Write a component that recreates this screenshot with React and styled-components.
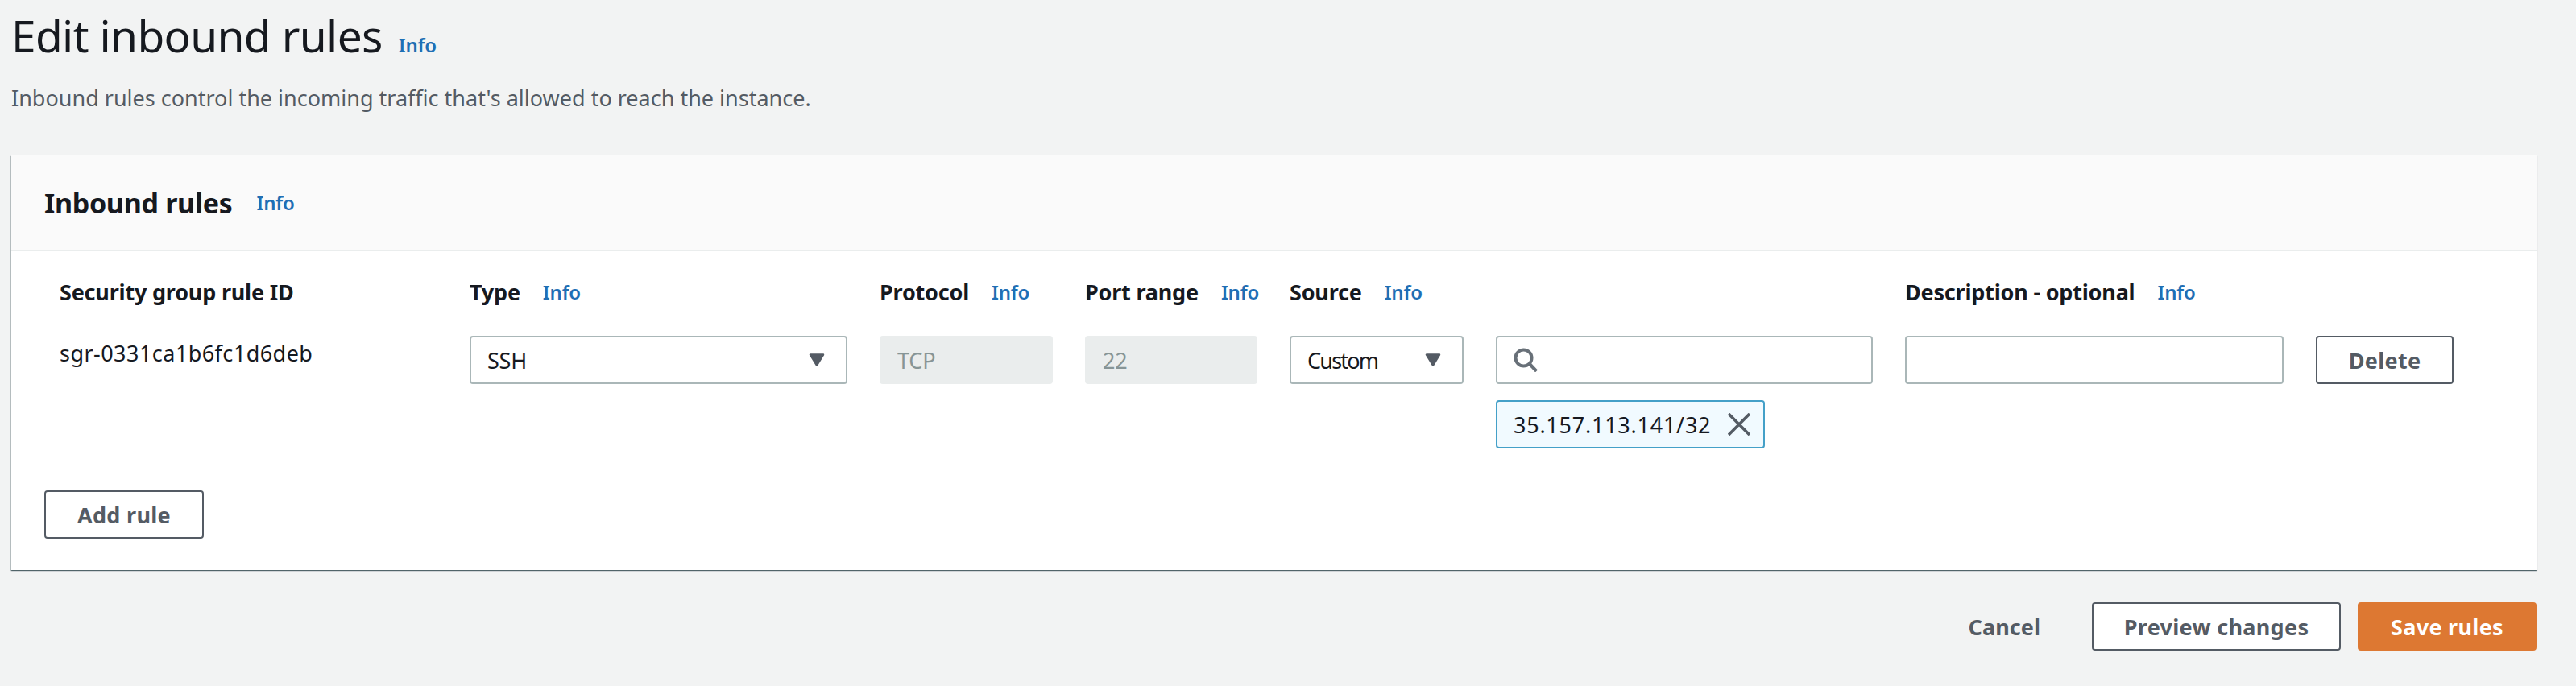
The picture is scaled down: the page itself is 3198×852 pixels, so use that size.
import React from "react";
import styled, { createGlobalStyle } from "styled-components";

const GlobalStyle = createGlobalStyle`
html, body {
  margin: 0;
  padding: 0;
  background: #f2f3f3;
  font-family: "Noto Sans", "Open Sans", sans-serif;
  color: #16191f;
}
`;

const Page = styled.div`
  width: 3198px;
  height: 852px;
  box-sizing: border-box;
  padding: 0 49px 0 14px;
  overflow: hidden;
  display: flex;
  flex-direction: column;
`;

const TitleRow = styled.div`
  display: flex;
  align-items: baseline;
  gap: 20px;
  height: 76px;
`;

const Title = styled.h1`
  margin: 0;
  font-size: 55px;
  line-height: 87px;
  font-weight: 400;
  letter-spacing: -0.65px;
`;

const Info = styled.a`
  font-size: 24px;
  font-weight: 600;
  color: #1f6fb5;
  letter-spacing: -0.2px;
`;

const Subtitle = styled.p`
  margin: 26px 0 0;
  font-size: 27px;
  line-height: 40px;
  color: #545b64;
`;

const Card = styled.section`
  margin-top: 51px;
  height: 515px;
  background: #fff;
  box-shadow: 0 1px 1px 0 rgba(0, 28, 36, 0.5), 1px 1px 1px 0 rgba(0, 28, 36, 0.18),
    -1px 1px 1px 0 rgba(0, 28, 36, 0.18);
  display: flex;
  flex-direction: column;
`;

const CardHeader = styled.header`
  height: 119px;
  box-sizing: border-box;
  background: #fafafa;
  border-bottom: 2px solid #eaeded;
  padding: 0 41px;
  display: flex;
  align-items: center;
  gap: 30px;
`;

const CardTitle = styled.h2`
  margin: 0;
  font-size: 34px;
  font-weight: 700;
  letter-spacing: -0.3px;
`;

const CardBody = styled.div`
  padding: 30px 41px 0;
  display: flex;
  flex-direction: column;
`;

const RuleGrid = styled.div`
  display: grid;
  padding-left: 19px;
  grid-template-columns: 469px 469px 215px 214px 216px 468px 470px 171px;
  grid-template-rows: 55px 60px 60px;
  column-gap: 40px;
  row-gap: 20px;
`;

const Label = styled.div`
  display: flex;
  align-items: center;
  gap: 28px;
  height: 40px;
  font-size: 27px;
  font-weight: 700;
  letter-spacing: -0.2px;
  white-space: nowrap;
`;

const RuleId = styled.div`
  padding-top: 2px;
  font-size: 27px;
  line-height: 40px;
  letter-spacing: 0.45px;
`;

const Box = styled.div`
  box-sizing: border-box;
  height: 60px;
  border: 2px solid #aab7b8;
  border-radius: 4px;
  background: #fff;
  padding: 0 26px 0 20px;
  display: flex;
  align-items: center;
  justify-content: space-between;
  font-size: 27px;
  letter-spacing: -0.2px;
`;

const DisabledBox = styled(Box)`
  background: #eaeded;
  border-color: #eaeded;
  color: #879596;
`;

const SearchBox = styled(Box)`
  justify-content: flex-start;
`;

const TightText = styled.span`
  letter-spacing: -1.8px;
`;

const Chip = styled.div`
  grid-column: 6;
  justify-self: start;
  box-sizing: border-box;
  width: 334px;
  height: 60px;
  border: 2px solid #44a0c8;
  border-radius: 4px;
  background: #f1faff;
  padding: 0 16px 0 20px;
  display: flex;
  align-items: center;
  justify-content: space-between;
  font-size: 27px;
  letter-spacing: 0.75px;
`;

const Button = styled.button`
  box-sizing: border-box;
  height: 60px;
  border: 2px solid #545b64;
  border-radius: 4px;
  background: #fff;
  color: #545b64;
  font-family: inherit;
  font-size: 27px;
  font-weight: 700;
  letter-spacing: 0.3px;
  padding: 0;
  width: ${(props) => props.$width}px;
`;

const AddRow = styled.div`
  margin-top: 52px;
`;

const Footer = styled.footer`
  margin-top: 40px;
  display: flex;
  justify-content: flex-end;
  align-items: center;
`;

const LinkButton = styled.span`
  font-size: 27px;
  font-weight: 700;
  letter-spacing: 0.05px;
  color: #545b64;
  margin-right: 64px;
`;

const PrimaryButton = styled(Button)`
  margin-left: 21px;
  background: #dd7832;
  border-color: #dd7832;
  color: #fff;
`;

const Caret = () => (
  <svg width="20" height="16" viewBox="0 0 20 16">
    <path d="M2 1.5h16L10 14.5z" fill="#545b64" stroke="#545b64" strokeWidth="2.5" strokeLinejoin="round" />
  </svg>
);

const SearchIcon = () => (
  <svg width="30" height="30" viewBox="0 0 30 30" fill="none" stroke="#687078" strokeWidth="4">
    <circle cx="12.5" cy="12.5" r="10" />
    <path d="M19.5 19.5l9 9.5" />
  </svg>
);

const CloseIcon = () => (
  <svg width="28" height="28" viewBox="0 0 28 28" fill="none" stroke="#545b64" strokeWidth="3.6">
    <path d="M1 1l26 26M27 1L1 27" />
  </svg>
);

const columns = [
  { text: "Security group rule ID" },
  { text: "Type", info: true },
  { text: "Protocol", info: true },
  { text: "Port range", info: true },
  { text: "Source", info: true },
  { text: "" },
  { text: "Description - optional", info: true },
  { text: "" },
];

const App = () => (
  <Page>
    <GlobalStyle />
    <TitleRow>
      <Title>Edit inbound rules</Title>
      <Info>Info</Info>
    </TitleRow>
    <Subtitle>Inbound rules control the incoming traffic that's allowed to reach the instance.</Subtitle>
    <Card>
      <CardHeader>
        <CardTitle>Inbound rules</CardTitle>
        <Info>Info</Info>
      </CardHeader>
      <CardBody>
        <RuleGrid>
          {columns.map((col, i) => (
            <Label key={i}>
              {col.text}
              {col.info && <Info>Info</Info>}
            </Label>
          ))}
          <RuleId>sgr-0331ca1b6fc1d6deb</RuleId>
          <Box>
            SSH
            <Caret />
          </Box>
          <DisabledBox>TCP</DisabledBox>
          <DisabledBox>22</DisabledBox>
          <Box>
            <TightText>Custom</TightText>
            <Caret />
          </Box>
          <SearchBox>
            <SearchIcon />
          </SearchBox>
          <Box />
          <Button $width={171}>Delete</Button>
          <Chip>
            35.157.113.141/32
            <CloseIcon />
          </Chip>
        </RuleGrid>
        <AddRow>
          <Button $width={198}>Add rule</Button>
        </AddRow>
      </CardBody>
    </Card>
    <Footer>
      <LinkButton>Cancel</LinkButton>
      <Button $width={309}>Preview changes</Button>
      <PrimaryButton $width={222}>Save rules</PrimaryButton>
    </Footer>
  </Page>
);

export default App;
